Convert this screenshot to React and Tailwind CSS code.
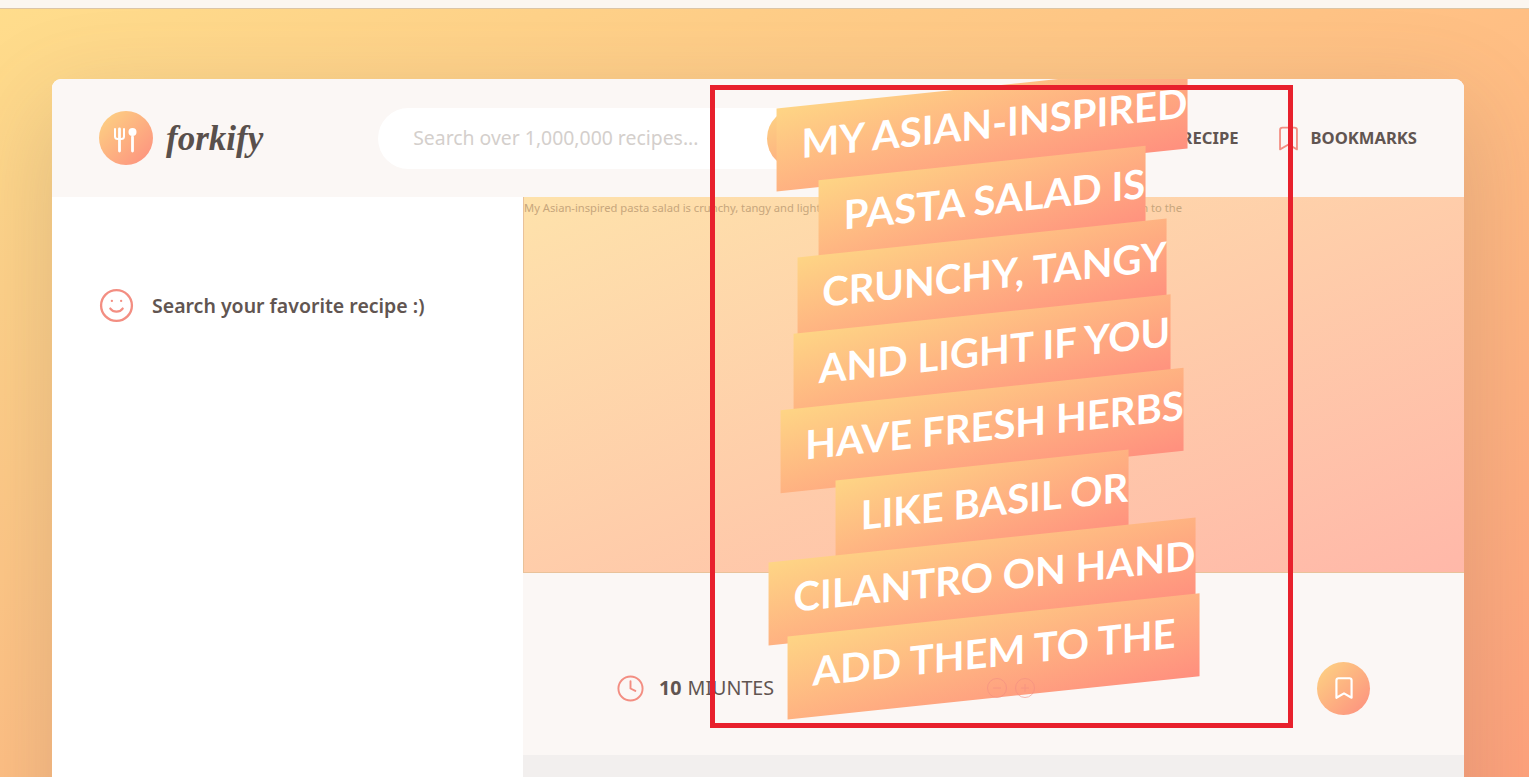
import { Bookmark, Clock, Minus, Plus, Search, Smile, SquarePen } from 'lucide-react'

const TITLE_LINES = [
  'My Asian-inspired',
  'pasta salad is',
  'crunchy, tangy',
  'and light if you',
  'have fresh herbs',
  'like basil or',
  'cilantro on hand',
  'add them to the',
]

const ALT_TEXT =
  'My Asian-inspired pasta salad is crunchy, tangy and light if you have fresh herbs like basil or cilantro on hand add them to the'

// ── Header ─────────────────────────────────────────────────────────────────────
function Logo() {
  return (
    <div className="flex items-center gap-[13px]">
      <div className="flex h-[54px] w-[54px] items-center justify-center rounded-full bg-linear-to-br/srgb from-[#fdd583] to-[#fd8e7f]">
        <svg width="30" height="30" viewBox="0 0 30 30" fill="none" stroke="white" strokeLinecap="round">
          <path d="M4 6v7.5q0 2.5 3 2.5h3q3 0 3-2.5V6" strokeWidth="2" />
          <path d="M8.500 6v22" strokeWidth="2.800" />
          <path d="M21.500 14v14" strokeWidth="2.800" />
          <circle cx="21.500" cy="9" r="4" fill="white" stroke="none" />
        </svg>
      </div>
      <span className="font-['Liberation_Serif',serif] text-[35px] font-bold italic leading-none text-[#59504c]">
        forkify
      </span>
    </div>
  )
}

function SearchBar() {
  return (
    <div className="ml-[115px] flex h-[61px] w-[546px] items-center rounded-full bg-white">
      <span className="flex-1 pl-[35px] text-[19.400px] text-[#d4cfcc]">Search over 1,000,000 recipes...</span>
      <button className="flex h-full w-[157px] items-center justify-center gap-2 rounded-full bg-linear-to-br/srgb from-[#fdd583] to-[#fd8e7f] text-[16px] font-bold text-white">
        <Search size={20} />
        SEARCH
      </button>
    </div>
  )
}

function Nav() {
  return (
    <div className="ml-auto flex items-center gap-[35px] pr-[47px] text-[16.600px] font-bold text-[#615551]">
      <div className="flex items-center gap-[12px]">
        <SquarePen size={22} className="text-[#f38e82]" />
        ADD RECIPE
      </div>
      <div className="flex items-center gap-[8px]">
        <Bookmark size={29} strokeWidth={1.500} className="text-[#f38e82]" />
        BOOKMARKS
      </div>
    </div>
  )
}

// ── Recipe details ─────────────────────────────────────────────────────────────
function RecipeDetails() {
  return (
    <div className="flex h-[182px] items-center bg-[#fbf7f5] pl-[93px] pr-[94px] pt-[48px] text-[19.700px] text-[#615551]">
      <Clock size={29} strokeWidth={1.600} className="text-[#f38e82]" />
      <span className="ml-[14px] font-bold">10</span>
      <span className="ml-[6px]">MIUNTES</span>
      <button className="ml-auto flex h-[53px] w-[53px] items-center justify-center rounded-full bg-linear-to-br/srgb from-[#fdd583] to-[#fd8e7f]">
        <Bookmark size={26} strokeWidth={2} className="text-white" />
      </button>
    </div>
  )
}

// Big skewed title, each wrapped line keeps its own gradient box
function RecipeTitle() {
  return (
    <h1 className="absolute left-[930px] top-[8px] w-max -translate-x-1/2 -skew-y-6 whitespace-nowrap text-center font-['Lato',sans-serif] text-[40px] font-bold uppercase leading-[75.500px] text-white">
      {TITLE_LINES.map((line, i) => (
        <span key={i}>
          <span
            className={`bg-linear-to-br/srgb from-[#fed585] to-[#ff8f7e] pb-[22px] pl-[25px] pt-[13px] [box-decoration-break:clone] ${
              i === TITLE_LINES.length - 1 ? 'ml-[23px] pr-[24px]' : ''
            }`}
          >
            {line}
          </span>
          <br />
        </span>
      ))}
    </h1>
  )
}

// ── Main component ─────────────────────────────────────────────────────────────
export default function App() {
  return (
    <div className="relative h-[777px] overflow-hidden bg-linear-to-br/srgb from-[#ffdd8c] to-[#ffa27c] font-['Noto_Sans',sans-serif]">
      {/* Browser strip */}
      <div className="h-[9px] border-b border-[#dcc5a5] bg-[#fbf6f0]" />

      {/* Card */}
      <div className="relative ml-[52px] mt-[70px] h-[800px] w-[1412px] overflow-hidden rounded-[9px] bg-white shadow-[0_32px_96px_8px_rgba(101,90,86,0.2)]">
        <header className="flex h-[118px] items-center bg-[#fbf7f5] pl-[47px]">
          <Logo />
          <SearchBar />
          <Nav />
        </header>

        <div className="flex">
          {/* Sidebar */}
          <aside className="w-[471px] bg-white pl-[46px] pt-[90px]">
            <div className="flex items-center gap-[17px] text-[19.500px] font-semibold text-[#615551]">
              <Smile size={37} strokeWidth={1.500} className="text-[#f38e82]" />
              Search your favorite recipe :)
            </div>
          </aside>

          {/* Recipe */}
          <main className="flex-1">
            <div className="h-[376px] border-b border-l border-[#e9c29a] bg-linear-to-br/srgb from-[#fee2ab] to-[#ffb8a9] pt-[3px] text-[11.200px] text-[#c7a67c]">
              {ALT_TEXT}
            </div>
            <RecipeDetails />
            <div className="h-[200px] bg-[#f2efee]" />
          </main>
        </div>

        <RecipeTitle />

        {/* Servings buttons sit faintly over the title */}
        <div className="absolute left-[935px] top-[599px] flex gap-[8px] text-[#f38e82] opacity-60">
          <span className="flex h-[20px] w-[20px] items-center justify-center rounded-full border border-current">
            <Minus size={12} />
          </span>
          <span className="flex h-[20px] w-[20px] items-center justify-center rounded-full border border-current">
            <Plus size={12} />
          </span>
        </div>
      </div>

      {/* Red highlight frame */}
      <div className="absolute left-[710px] top-[85px] h-[643px] w-[583px] border-[5px] border-[#e8202c]" />
    </div>
  )
}
